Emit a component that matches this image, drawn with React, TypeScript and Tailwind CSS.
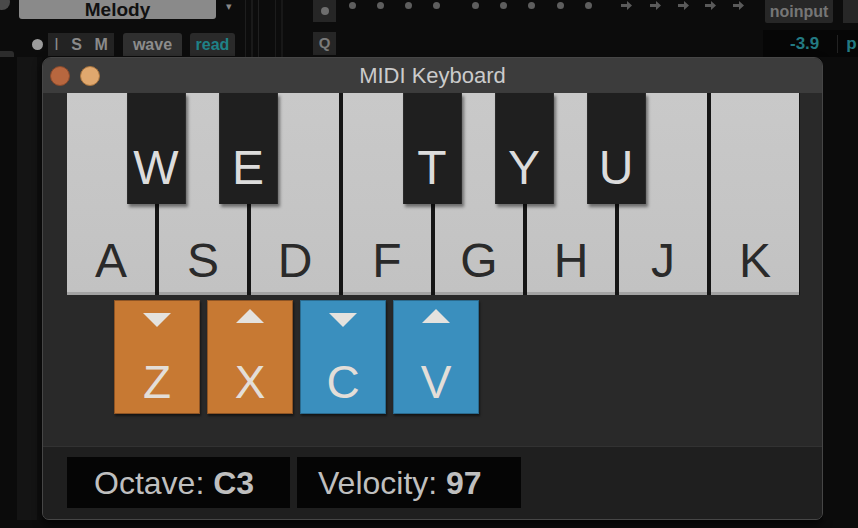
import React from "react";

const whiteKeys = ["A", "S", "D", "F", "G", "H", "J", "K"];
const blackKeys = [
  { label: "W", after: 0 },
  { label: "E", after: 1 },
  { label: "T", after: 3 },
  { label: "Y", after: 4 },
  { label: "U", after: 5 },
];

type Pad = { label: string; dir: "down" | "up"; color: "orange" | "blue" };
const pads: Pad[] = [
  { label: "Z", dir: "down", color: "orange" },
  { label: "X", dir: "up", color: "orange" },
  { label: "C", dir: "down", color: "blue" },
  { label: "V", dir: "up", color: "blue" },
];

const dots = [352, 380, 408, 436, 475, 503, 531, 560, 588];
const arrows = [626, 655, 683, 710, 738];

const Triangle = ({ dir }: { dir: "down" | "up" }) => (
  <svg width="30" height="16" viewBox="0 0 30 16">
    {dir === "down" ? (
      <polygon points="1,1 29,1 15,15" fill="#e4e2de" />
    ) : (
      <polygon points="1,15 29,15 15,1" fill="#e4e2de" />
    )}
  </svg>
);

const TopStrip = () => (
  <div className="h-[57px] flex shrink-0">
    {/* track header */}
    <div className="w-[240px] flex flex-col">
      <div className="h-[22px] flex items-start">
        <div className="w-[19px] h-[12px] overflow-hidden">
          <div className="w-[16px] h-[16px] rounded-full bg-[#4a4a4a] -mt-[6px] -ml-[6px]" />
        </div>
        <div className="w-[197px] h-[19px] bg-[#8a8a8a] rounded-b-[3px] flex items-center justify-center">
          <span className="text-[19px] font-bold text-[#111] leading-[19px]">Melody</span>
        </div>
        <span className="ml-[10px] mt-[1px] text-[11px] leading-none text-[#888]">▾</span>
      </div>
      <div className="mt-[11px] h-[23px] flex items-center">
        <div className="w-[32px] h-full flex items-end">
          <div className="w-[14px] h-[10px] bg-[#2c2c2c] rounded-tr-[3px] -mb-[5px]" />
        </div>
        <div className="w-[11px] h-[11px] rounded-full bg-[#9c9c9c]" />
        <div className="ml-[5px] w-[66px] h-full bg-[#232323] flex items-center justify-around text-[16px] font-bold text-[#8a8a8a]">
          <span className="font-normal">I</span>
          <span>S</span>
          <span>M</span>
        </div>
        <div className="ml-[9px] w-[59px] h-full bg-[#2f2f2f] rounded-t-[3px] flex items-center justify-center text-[16px] font-bold text-[#8c8c8c]">
          wave
        </div>
        <div className="ml-[8px] w-[45px] h-full bg-[#2a2a2a] rounded-t-[3px] flex items-center justify-center text-[16px] font-bold text-[#1f8288]">
          read
        </div>
      </div>
    </div>
    {/* separators */}
    <div className="w-[73px] flex gap-[5px] pl-[5px]">
      <div className="w-px bg-[#1e1e1e]" />
      <div className="w-[2px] bg-[#1a1a1a]" />
      <div className="w-px bg-[#202020]" />
      <div className="w-[6px]" />
      <div className="w-px bg-[#1c1c1c]" />
      <div className="w-[2px] bg-[#181818]" />
    </div>
    {/* small buttons */}
    <div className="w-[23px] flex flex-col">
      <div className="h-[22px] bg-[#262626] flex items-center justify-center">
        <div className="w-[8px] h-[8px] rounded-full bg-[#6e6e6e]" />
      </div>
      <div className="mt-[10px] h-[23px] bg-[#262626] flex items-center justify-center text-[15px] font-bold text-[#7a7a7a]">
        Q
      </div>
    </div>
    {/* step row */}
    <div className="w-[427px] relative">
      {dots.map((x) => (
        <div
          key={x}
          className="absolute top-[2px] w-[7px] h-[7px] rounded-full bg-[#5e5e5e]"
          style={{ left: x - 336 - 3 }}
        />
      ))}
      {arrows.map((x) => (
        <svg
          key={x}
          className="absolute top-[1px]"
          style={{ left: x - 336 - 5 }}
          width="11"
          height="9"
          viewBox="0 0 11 9"
        >
          <path d="M0 3h6V0l5 4.5L6 9V6H0z" fill="#5a5a5a" />
        </svg>
      ))}
    </div>
    {/* input / meter */}
    <div className="flex-1 flex flex-col">
      <div className="h-[23px] flex">
        <div className="ml-[2px] w-[68px] bg-[#272727] rounded-b-[2px] flex items-center justify-center text-[16px] font-bold text-[#767676]">
          noinput
        </div>
        <div className="ml-[10px] flex-1 bg-[#272727]" />
      </div>
      <div className="mt-[7px] flex-1 bg-[#060606] flex items-center">
        <span className="ml-[27px] text-[17px] font-bold text-[#237a82]">-3.9</span>
        <div className="ml-[18px] w-px h-[18px] bg-[#222]" />
        <span className="ml-[8px] text-[17px] font-bold text-[#237a82]">p</span>
      </div>
    </div>
  </div>
);

const Keyboard = () => (
  <div className="relative w-[733px] h-[202px] flex gap-[4px] bg-[#151515]">
    {whiteKeys.map((k) => (
      <div
        key={k}
        className="w-[88px] h-full bg-gradient-to-b from-[#c9c9c9] to-[#c2c2c2] border-b-[3px] border-[#a3a3a3] flex items-end justify-center pb-[7px]"
      >
        <span className="text-[48px] leading-none text-[#2a2a2a]">{k}</span>
      </div>
    ))}
    {blackKeys.map((b) => (
      <div
        key={b.label}
        className="absolute top-0 w-[59px] h-[111px] bg-[#1f1f1f] border-x border-[#2b2b2b] shadow-[2px_3px_3px_rgba(0,0,0,0.45)] flex items-end justify-center pb-[12px]"
        style={{ left: (b.after + 1) * 92 - 2 - 30.5 }}
      >
        <span className="text-[48px] leading-none text-[#dcdcdc]">{b.label}</span>
      </div>
    ))}
  </div>
);

const Pads = () => (
  <div className="mt-[5px] pl-[47px] flex gap-[7px]">
    {pads.map((p) => (
      <div
        key={p.label}
        className={
          p.color === "orange"
            ? "w-[86px] h-[114px] bg-[#c77933] border border-[#8e5424] shadow-[1px_2px_2px_rgba(0,0,0,0.5)] flex flex-col items-center"
            : "w-[86px] h-[114px] bg-[#3a8fbe] border border-[#2a6a8e] shadow-[1px_2px_2px_rgba(0,0,0,0.5)] flex flex-col items-center"
        }
      >
        <div className={p.dir === "down" ? "mt-[11px]" : "mt-[7px] mb-[4px]"}>
          <Triangle dir={p.dir} />
        </div>
        <span className="mt-[31px] text-[46px] leading-none text-[#e3ded8]">{p.label}</span>
      </div>
    ))}
  </div>
);

export default function App() {
  return (
    <div
      className="w-[858px] h-[528px] bg-[#0c0c0c] overflow-hidden flex flex-col"
      style={{ fontFamily: '"Liberation Sans", Arial, sans-serif' }}
    >
      <TopStrip />
      <div className="flex h-[463px]">
        <div className="w-[42px] flex">
          <div className="w-[17px] bg-[#0b0b0b]" />
          <div className="w-[20px] bg-[#141414]" />
          <div className="w-[5px] bg-[#0e0e0e]" />
        </div>
        <div className="w-[781px] flex flex-col rounded-t-[9px] rounded-b-[7px] border border-[#464646] bg-[#292929] overflow-hidden shadow-[0_4px_10px_rgba(0,0,0,0.7)]">
          <div className="h-[35px] shrink-0 bg-[#3c3c3c] grid grid-cols-[1fr_auto_1fr] items-center">
            <div className="flex items-center gap-[10px] pl-[7px]">
              <div className="w-[20px] h-[20px] rounded-full bg-[#b8673f] border border-[#8a4a2c]" />
              <div className="w-[20px] h-[20px] rounded-full bg-[#e0a86e] border border-[#a8743e]" />
            </div>
            <span className="text-[22px] text-[#cbcbcb] leading-none">MIDI Keyboard</span>
            <div />
          </div>
          <div className="flex-1 flex flex-col px-[24px]">
            <Keyboard />
            <Pads />
          </div>
          <div className="h-[73px] shrink-0 bg-[#1f1f1f] border-t border-[#323232] flex items-start gap-[7px] pt-[10px] px-[24px]">
            <div className="w-[223px] h-[51px] bg-[#050505] flex items-center pl-[27px] text-[32px] text-[#bfbfbf] leading-none">
              Octave:&nbsp;<b>C3</b>
            </div>
            <div className="w-[224px] h-[51px] bg-[#050505] flex items-center pl-[21px] text-[32px] text-[#bfbfbf] leading-none">
              Velocity:&nbsp;<b>97</b>
            </div>
          </div>
        </div>
        <div className="flex-1 bg-[#0b0b0b]" />
      </div>
    </div>
  );
}
